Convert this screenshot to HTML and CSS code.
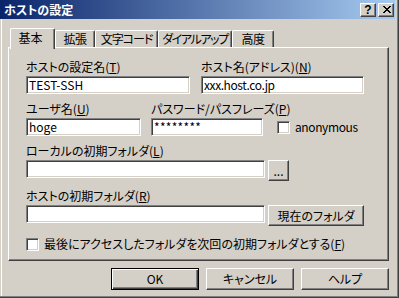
FILE: index.html
```html
<!DOCTYPE html>
<html lang="ja">
<head>
<meta charset="utf-8">
<title>ホストの設定</title>
<link rel="stylesheet" href="styles.css">
</head>
<body>
<div class="window">
  <div class="titlebar">
    <span class="title">ホストの設定</span>
    <div class="caption-btns">
      <div class="cbtn help">?</div>
      <div class="cbtn close">
        <svg width="8" height="7" viewBox="0 0 8 7" shape-rendering="crispEdges">
          <path d="M0 0h2v1H0zM6 0h2v1H6zM1 1h2v1H1zM5 1h2v1H5zM2 2h4v1H2zM3 3h2v1H3zM2 4h4v1H2zM1 5h2v1H1zM5 5h2v1H5zM0 6h2v1H0zM6 6h2v1H6z" fill="#000"/>
        </svg>
      </div>
    </div>
  </div>
  <div class="client">
    <div class="tabs">
      <div class="tab active t-basic">基本</div>
      <div class="tab t-ext">拡張</div>
      <div class="tab t-code">文字コード</div>
      <div class="tab t-dial">ダイアルアップ</div>
      <div class="tab t-adv">高度</div>
    </div>
    <div class="panel">
      <div class="row">
        <div class="field w-name">
          <div class="label">ホストの設定名(<u>T</u>)</div>
          <div class="edit">TEST-SSH</div>
        </div>
        <div class="field w-host">
          <div class="label">ホスト名(アドレス)(<u>N</u>)</div>
          <div class="edit latin">xxx.host.co.jp</div>
        </div>
      </div>
      <div class="row">
        <div class="field w-user">
          <div class="label">ユーザ名(<u>U</u>)</div>
          <div class="edit">hoge</div>
        </div>
        <div class="field w-pass">
          <div class="label">パスワード/パスフレーズ(<u>P</u>)</div>
          <div class="edit pw">********</div>
        </div>
        <div class="check anon">
          <span class="box"></span>
          <span class="check-text latin">anonymous</span>
        </div>
      </div>
      <div class="row">
        <div class="field w-full">
          <div class="label">ローカルの初期フォルダ(<u>L</u>)</div>
          <div class="inline">
            <div class="edit wide"></div>
            <div class="btn small">...</div>
          </div>
        </div>
      </div>
      <div class="row">
        <div class="field w-full">
          <div class="label">ホストの初期フォルダ(<u>R</u>)</div>
          <div class="inline">
            <div class="edit wide"></div>
            <div class="btn cur">現在のフォルダ</div>
          </div>
        </div>
      </div>
      <div class="check last">
        <span class="box"></span>
        <span class="check-text">最後にアクセスしたフォルダを次回の初期フォルダとする(<u>F</u>)</span>
      </div>
    </div>
    <div class="buttons">
      <div class="btn dlg default">OK</div>
      <div class="btn dlg">キャンセル</div>
      <div class="btn dlg">ヘルプ</div>
    </div>
  </div>
</div>
</body>
</html>
```

FILE: styles.css
```css
* { box-sizing: border-box; margin: 0; padding: 0; }
html, body { width: 399px; height: 298px; overflow: hidden; }
body {
  background: #D4D0C8;
  font-family: "Noto Sans CJK JP", "Noto Sans", sans-serif;
  font-size: 12px;
  line-height: 14px;
  color: #000;
  font-feature-settings: "palt";
}
u { text-decoration: underline; text-underline-offset: 1px; }

.window {
  width: 399px;
  height: 298px;
  display: flex;
  flex-direction: column;
  padding: 0 4px 4px 0;
  box-shadow: inset -1px -1px #404040, inset -2px -2px #808080, inset 1px 0 #D4D0C8, inset 2px 0 #fff;
}

.titlebar {
  height: 19px;
  display: flex;
  align-items: center;
  justify-content: space-between;
  padding: 0 1px 0 4px;
  background: linear-gradient(to right, #0A246A, #A6CAF0);
}
.title { color: #fff; font-weight: bold; font-size: 12px; }
.caption-btns { display: flex; gap: 2px; }
.cbtn {
  width: 16px;
  height: 14px;
  background: #D4D0C8;
  border: 1px solid;
  border-color: #fff #404040 #404040 #fff;
  box-shadow: inset -1px -1px #808080;
  display: flex;
  align-items: center;
  justify-content: center;
  font-family: "Liberation Sans", sans-serif;
  font-weight: bold;
  font-size: 12px;
  line-height: 12px;
}
.cbtn.close svg { display: block; margin-left: 1px; }

.client {
  flex: 1;
  padding: 9px 0 0 8px;
  display: flex;
  flex-direction: column;
}

.tabs {
  display: flex;
  align-items: flex-end;
  height: 19px;
  padding-left: 2px;
  position: relative;
  z-index: 1;
}
.tab {
  height: 17px;
  padding-top: 1px;
  border-top: 1px solid #fff;
  border-left: 1px solid #fff;
  border-right: 1px solid #404040;
  box-shadow: inset -1px 0 #808080;
  border-radius: 2px 2px 0 0;
  background: #D4D0C8;
  white-space: nowrap;
  display: flex;
  justify-content: center;
  letter-spacing: -0.5px;
}
.tab.active {
  height: 21px;
  margin-bottom: -2px;
  padding: 2px 4px 0 0;
  letter-spacing: 0;
}
.t-basic { width: 45px; }
.t-ext { width: 40px; }
.t-code { width: 63px; letter-spacing: -1px; }
.t-dial { width: 74px; letter-spacing: -1.4px; }
.t-adv { width: 42px; }

.panel {
  width: 381px;
  height: 214px;
  border: 1px solid;
  border-color: #fff #404040 #404040 #fff;
  box-shadow: inset -1px -1px #808080;
  padding: 12px 0 0 17px;
  display: flex;
  flex-direction: column;
  gap: 8px;
}
.row { display: flex; align-items: flex-end; }
.field { display: flex; flex-direction: column; gap: 2px; }
.label { white-space: nowrap; height: 14px; }
.w-name { width: 164px; margin-right: 11px; }
.w-host { width: 163px; }
.w-user { width: 115px; margin-right: 10px; }
.w-pass { width: 112px; margin-right: 14px; }
.w-full { width: 338px; }

.edit {
  height: 18px;
  background: #fff;
  border: 1px solid;
  border-color: #808080 #fff #fff #808080;
  box-shadow: inset 1px 1px #404040, inset -1px -1px #D4D0C8;
  padding: 1px 0 0 2px;
  white-space: nowrap;
  overflow: hidden;
}
.latin { letter-spacing: -0.4px; }
.edit.pw { letter-spacing: 0.3px; }
.inline { display: flex; gap: 3px; align-items: flex-start; }
.edit.wide { width: 239px; }

.btn {
  background: #D4D0C8;
  border: 1px solid;
  border-color: #fff #404040 #404040 #fff;
  box-shadow: inset -1px -1px #808080;
  display: flex;
  align-items: center;
  justify-content: center;
  white-space: nowrap;
}
.btn.small { width: 21px; height: 21px; }
.btn.cur { width: 96px; height: 21px; }

.check { display: flex; align-items: center; gap: 5px; }
.anon { margin-bottom: 2px; }
.last { margin-top: 3px; }
.box {
  width: 13px;
  height: 13px;
  background: #fff;
  border: 1px solid;
  border-color: #808080 #fff #fff #808080;
  box-shadow: inset 1px 1px #404040, inset -1px -1px #D4D0C8;
}
.check-text { white-space: nowrap; }

.buttons {
  width: 381px;
  margin-top: 7px;
  display: flex;
  justify-content: flex-end;
  gap: 7px;
}
.btn.dlg { width: 88px; height: 22px; }
.btn.default {
  border: 1px solid #000;
  box-shadow: inset 1px 1px #fff, inset -1px -1px #404040, inset -2px -2px #808080;
}
```
